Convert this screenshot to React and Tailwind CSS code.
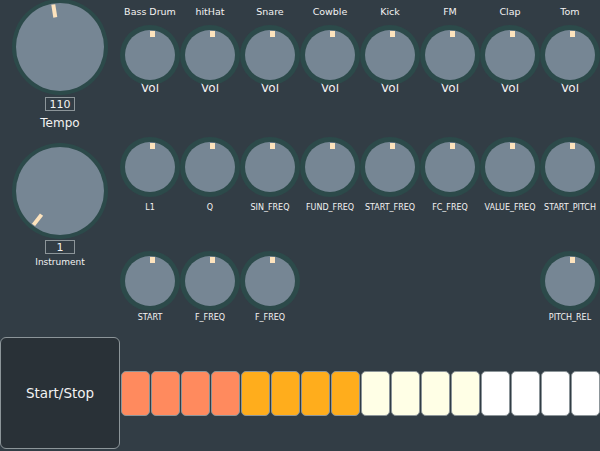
import React from "react";

const FONT = { fontFamily: '"DejaVu Sans", Verdana, sans-serif' };

function SmallKnob() {
  return (
    <div className="relative w-[60px] h-[60px] rounded-full bg-[#2c4a4a] flex items-center justify-center">
      <div className="w-[50px] h-[50px] rounded-full bg-[#768694]" />
      <div className="absolute left-[30px] top-[6px] w-[5px] h-[6px] bg-[#fde3bd]" />
    </div>
  );
}

function BigKnob({ angle, top }) {
  return (
    <div className="relative w-[96px] h-[96px] rounded-full bg-[#2c4a4a] flex items-center justify-center">
      <div className="w-[88px] h-[88px] rounded-full bg-[#768694]" />
      <div className="absolute inset-0" style={{ transform: `rotate(${angle}deg)` }}>
        <div className="absolute left-[46px] w-[4px] h-[13px] bg-[#fde3bd]" style={{ top }} />
      </div>
    </div>
  );
}

const drums = ["Bass Drum", "hitHat", "Snare", "Cowble", "Kick", "FM", "Clap", "Tom"];
const row2 = ["L1", "Q", "SIN_FREQ", "FUND_FREQ", "START_FREQ", "FC_FREQ", "VALUE_FREQ", "START_PITCH"];
const row3 = ["START", "F_FREQ", "F_FREQ", null, null, null, null, "PITCH_REL"];

const steps = [
  "bg-[#ff8a5e]", "bg-[#ff8a5e]", "bg-[#ff8a5e]", "bg-[#ff8a5e]",
  "bg-[#ffad1c]", "bg-[#ffad1c]", "bg-[#ffad1c]", "bg-[#ffad1c]",
  "bg-[#ffffe6]", "bg-[#ffffe6]", "bg-[#ffffe6]", "bg-[#ffffe6]",
  "bg-white", "bg-white", "bg-white", "bg-white",
];

export default function App() {
  return (
    <div className="w-[600px] h-[451px] bg-[#323d45] overflow-hidden text-[#f2f2f2]" style={FONT}>
      <div className="flex h-[337px]">
        <div className="w-[120px] flex flex-col items-center">
          <div className="-mt-px">
            <BigKnob angle={-9} top={5} />
          </div>
          <div className="mt-[2px] w-[30px] h-[14px] border border-[#8c9599] flex items-center justify-center text-[11px] leading-none">
            110
          </div>
          <div className="mt-[4px] text-[12px] leading-[16px]">Tempo</div>
          <div className="mt-[12px]">
            <BigKnob angle={-142} top={5} />
          </div>
          <div className="mt-[1px] w-[30px] h-[14px] border border-[#8c9599] flex items-center justify-center text-[11px] leading-none">
            1
          </div>
          <div className="mt-[2px] text-[9px] leading-[12px]">Instrument</div>
        </div>
        <div className="w-[480px] flex flex-col">
          <div className="grid grid-cols-8">
            {drums.map((d) => (
              <div key={d} className="flex flex-col items-center">
                <div className="h-[25px] text-[9.5px] leading-[24px] whitespace-nowrap">{d}</div>
                <SmallKnob />
                <div className="-mt-[5px] text-[12px] leading-[16px]">Vol</div>
              </div>
            ))}
          </div>
          <div className="grid grid-cols-8 pt-[41px]">
            {row2.map((d) => (
              <div key={d} className="flex flex-col items-center">
                <SmallKnob />
                <div className="mt-[5px] text-[8px] leading-[12px] whitespace-nowrap">{d}</div>
              </div>
            ))}
          </div>
          <div className="grid grid-cols-8 pt-[37px]">
            {row3.map((d, i) => (
              <div key={i} className="flex flex-col items-center">
                {d && (
                  <>
                    <SmallKnob />
                    <div className="mt-[1px] text-[8px] leading-[12px] whitespace-nowrap">{d}</div>
                  </>
                )}
              </div>
            ))}
          </div>
        </div>
      </div>
      <div className="flex items-center h-[112px]">
        <div className="w-[120px] h-[112px] shrink-0 rounded-[6px] border border-[#8c9599] bg-[#293137] flex items-center justify-center text-[13.5px]">
          Start/Stop
        </div>
        <div className="flex gap-[1px] ml-[1px]">
          {steps.map((c, i) => (
            <div key={i} className={`w-[29px] h-[45px] rounded-[5px] border border-[#8c9599] ${c}`} />
          ))}
        </div>
      </div>
    </div>
  );
}
